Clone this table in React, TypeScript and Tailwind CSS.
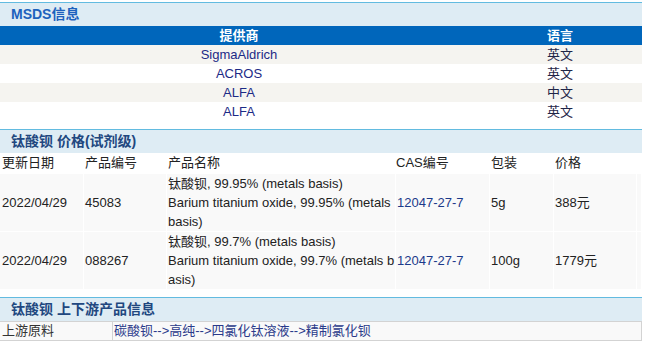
const font = 'font-["Liberation_Sans","Noto_Sans_CJK_SC",sans-serif]';

const providers = [
  { name: 'SigmaAldrich', lang: '英文' },
  { name: 'ACROS', lang: '英文' },
  { name: 'ALFA', lang: '中文' },
  { name: 'ALFA', lang: '英文' },
];

const prices = [
  {
    date: '2022/04/29',
    code: '45083',
    lines: ['钛酸钡, 99.95% (metals basis)', 'Barium titanium oxide, 99.95% (metals', 'basis)'],
    cas: '12047-27-7',
    pack: '5g',
    price: '388元',
  },
  {
    date: '2022/04/29',
    code: '088267',
    lines: ['钛酸钡, 99.7% (metals basis)', 'Barium titanium oxide, 99.7% (metals b', 'asis)'],
    cas: '12047-27-7',
    pack: '100g',
    price: '1779元',
  },
];

function SectionTitle({ children, light }: { children: React.ReactNode; light?: boolean }) {
  return (
    <div
      className={`h-[24px] border-t border-[#62bbe0] bg-[#deecf4] pl-[11px] flex items-center text-[14px] font-bold ${
        light ? 'text-[#1d62bd]' : 'text-[#21477f]'
      }`}
    >
      {children}
    </div>
  );
}

export default function App() {
  return (
    <div className={`w-[642px] bg-white text-[13px] text-[#222] ${font}`}>
      {/* MSDS */}
      <div className="mt-[2px]">
        <SectionTitle light>MSDS信息</SectionTitle>
        <div className="grid grid-cols-[478px_164px] h-[19px] bg-[#0066bb] text-white font-bold items-center text-center leading-[19px]">
          <span>提供商</span>
          <span>语言</span>
        </div>
        {providers.map((p, i) => (
          <div
            key={i}
            className={`grid grid-cols-[478px_164px] h-[19px] items-center text-center leading-[19px] ${
              i % 2 === 0 ? 'bg-[#f5f4f0]' : 'bg-white'
            }`}
          >
            <span className="text-[#1c2a86]">{p.name}</span>
            <span className="text-[#1f2547]">{p.lang}</span>
          </div>
        ))}
      </div>

      {/* prices */}
      <div className="mt-[8px]">
        <SectionTitle>钛酸钡 价格(试剂级)</SectionTitle>
        <div className="grid grid-cols-[83px_82px_228px_93px_63px_82px_4px] gap-px">
          <div className="h-[20px] leading-[20px] pl-[2px]">更新日期</div>
          <div className="h-[20px] leading-[20px] pl-[1px]">产品编号</div>
          <div className="h-[20px] leading-[20px] pl-[1px]">产品名称</div>
          <div className="h-[20px] leading-[20px]">CAS编号</div>
          <div className="h-[20px] leading-[20px] pl-[1px]">包装</div>
          <div className="h-[20px] leading-[20px] pl-[1px]">价格</div>
          <div />
          {prices.map((r, i) => (
            <div key={i} className="contents">
              <div className="bg-[#f9f9f9] h-[57px] flex items-center pl-[2px]">{r.date}</div>
              <div className="bg-[#f9f9f9] flex items-center pl-[1px]">{r.code}</div>
              <div className="bg-[#f9f9f9] pl-[1px] leading-[19px] overflow-hidden">
                {r.lines.map((l, j) => (
                  <div key={j} className="whitespace-nowrap">{l}</div>
                ))}
              </div>
              <div className="bg-[#f9f9f9] flex items-center pl-[1px] text-[#1c3a8a]">{r.cas}</div>
              <div className="bg-[#f9f9f9] flex items-center pl-[1px]">{r.pack}</div>
              <div className="bg-[#f9f9f9] flex items-center pl-[1px]">{r.price}</div>
              <div className="bg-[#f9f9f9]" />
            </div>
          ))}
        </div>
      </div>

      {/* upstream / downstream */}
      <div className="mt-[8px]">
        <SectionTitle>钛酸钡 上下游产品信息</SectionTitle>
        <div className="flex h-[20px] border-y border-r border-[#d3d3d3] bg-[#f9f9f9] leading-[18px]">
          <div className="w-[113px] shrink-0 border-r border-[#d3d3d3] pl-[2px] text-[#333]">上游原料</div>
          <div className="pl-[1px] text-[#2a3a8a]">碳酸钡--&gt;高纯--&gt;四氯化钛溶液--&gt;精制氯化钡</div>
        </div>
      </div>
    </div>
  );
}
